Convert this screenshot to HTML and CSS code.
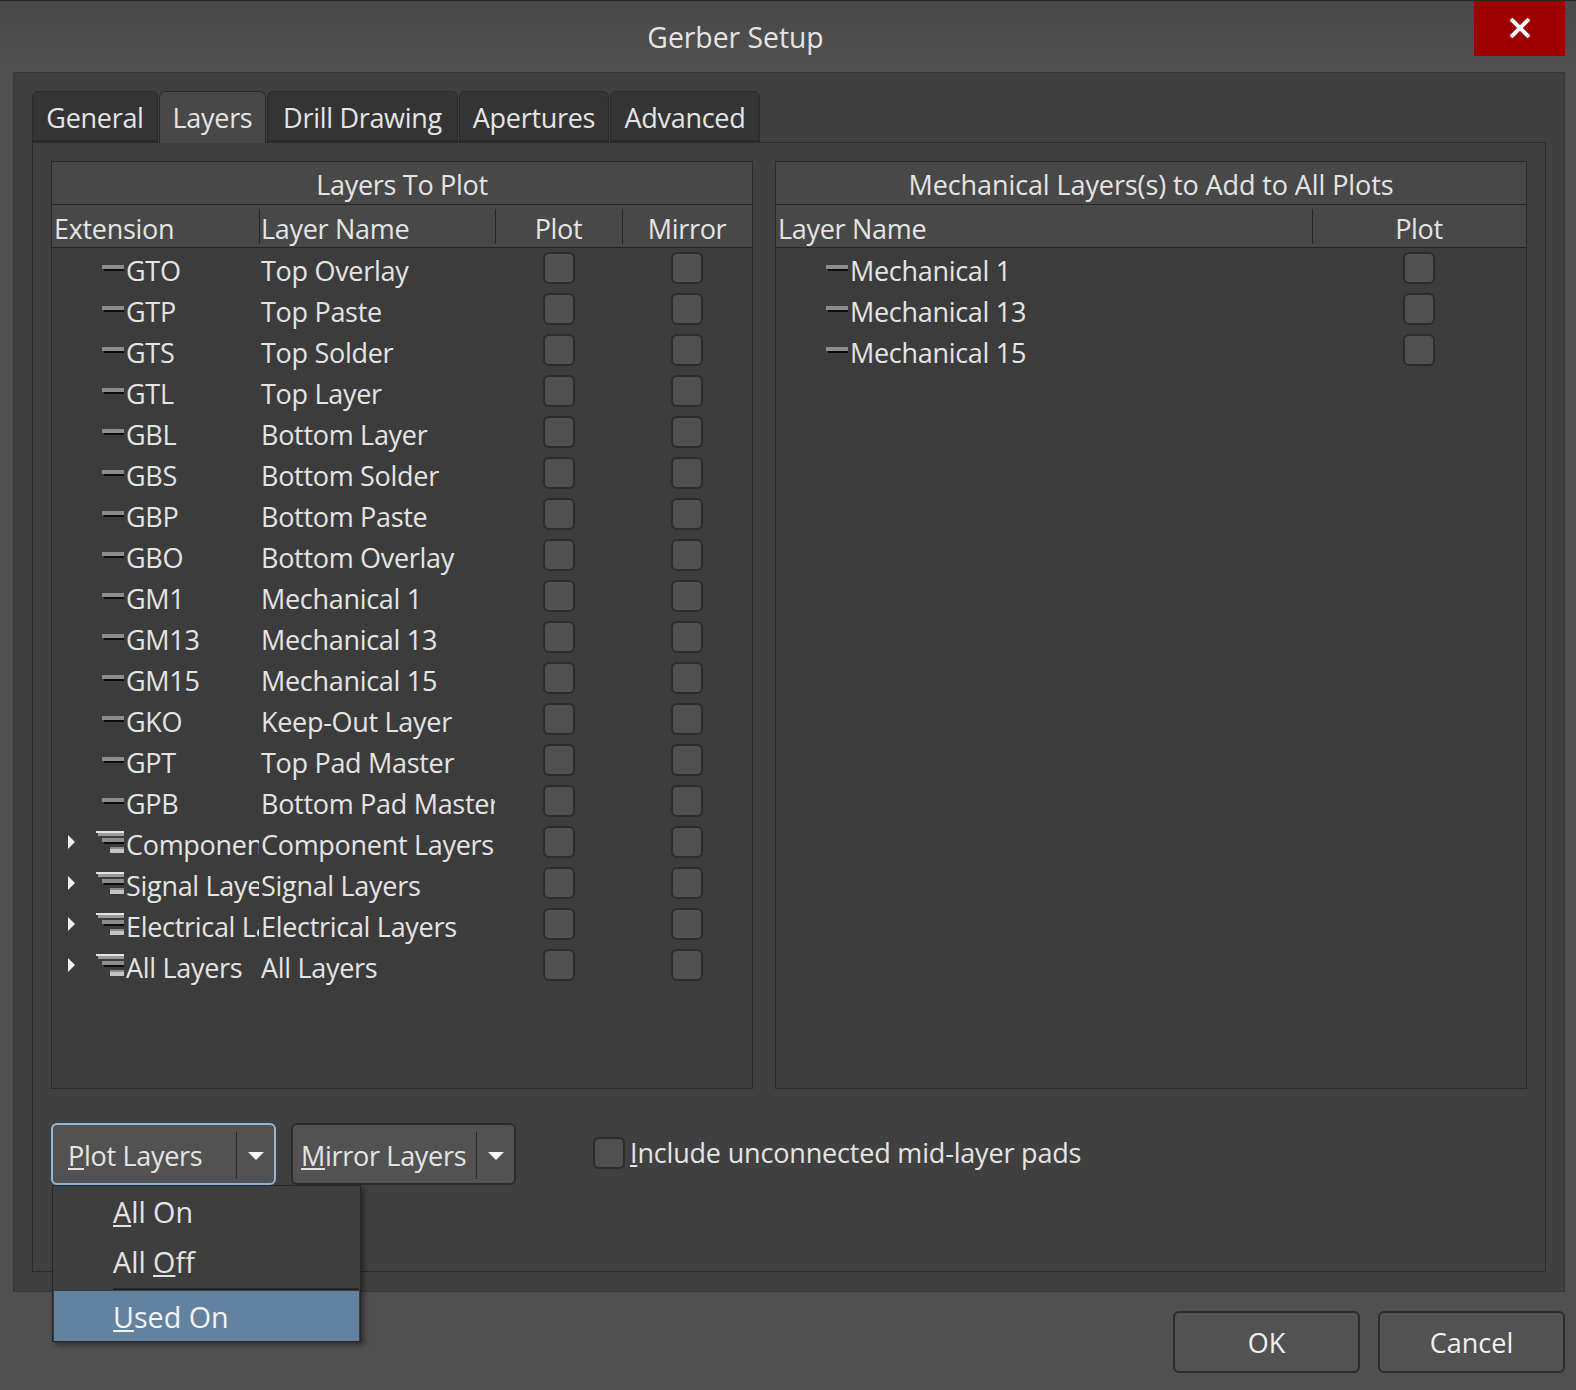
FILE: index.html
```html
<!DOCTYPE html>
<html>
<head>
	<meta charset="UTF-8">
	<title>Gerber Setup</title>
	<link rel="stylesheet" href="styles.css">
</head>
<body>
	<svg class="defs" width="0" height="0">
		<symbol id="line" viewBox="0 0 22 6">
			<rect x="0" y="0" width="22" height="4" fill="#8c8c8c"/>
			<rect x="2" y="4" width="20" height="2" fill="#0c0c0c"/>
		</symbol>
		<symbol id="stack" viewBox="0 0 28 22">
			<rect x="0" y="0" width="28" height="2" fill="#e4e4e4"/>
			<rect x="2" y="2" width="26" height="3" fill="#9a9a9a"/>
			<rect x="6" y="7" width="22" height="4" fill="#8c8c8c"/>
			<rect x="8" y="11" width="20" height="2" fill="#0c0c0c"/>
			<rect x="14" y="16" width="14" height="2" fill="#8c8c8c"/>
			<rect x="14" y="18" width="14" height="4" fill="#c4c4c4"/>
		</symbol>
	</svg>
	<div class="dialog">
		<header class="titlebar">
			<span class="title">Gerber Setup</span>
			<button class="close">
				<svg width="22" height="20" viewBox="0 0 22 20"><path d="M2 1 L20 19 M20 1 L2 19" stroke="#fff" stroke-width="4" fill="none"/></svg>
			</button>
		</header>

		<main class="group">
			<nav class="tabs">
				<div class="tab tab-general">General</div>
				<div class="tab tab-layers active">Layers</div>
				<div class="tab tab-drill">Drill Drawing</div>
				<div class="tab tab-apertures">Apertures</div>
				<div class="tab tab-advanced">Advanced</div>
			</nav>
			<section class="panel">
				<div class="tables">
					<div class="table table-layers">
						<div class="table-title">Layers To Plot</div>
						<div class="row head">
							<div class="c-ext">Extension</div>
							<div class="c-name sep">Layer Name</div>
							<div class="c-plot sep">Plot</div>
							<div class="c-mirror sep">Mirror</div>
						</div>
						<div class="row"><div class="c-ext tree"><svg class="ic"><use href="#line"/></svg><span>GTO</span></div><div class="c-name"><span>Top Overlay</span></div><div class="c-plot"><i class="cb"></i></div><div class="c-mirror"><i class="cb"></i></div></div>
						<div class="row"><div class="c-ext tree"><svg class="ic"><use href="#line"/></svg><span>GTP</span></div><div class="c-name"><span>Top Paste</span></div><div class="c-plot"><i class="cb"></i></div><div class="c-mirror"><i class="cb"></i></div></div>
						<div class="row"><div class="c-ext tree"><svg class="ic"><use href="#line"/></svg><span>GTS</span></div><div class="c-name"><span>Top Solder</span></div><div class="c-plot"><i class="cb"></i></div><div class="c-mirror"><i class="cb"></i></div></div>
						<div class="row"><div class="c-ext tree"><svg class="ic"><use href="#line"/></svg><span>GTL</span></div><div class="c-name"><span>Top Layer</span></div><div class="c-plot"><i class="cb"></i></div><div class="c-mirror"><i class="cb"></i></div></div>
						<div class="row"><div class="c-ext tree"><svg class="ic"><use href="#line"/></svg><span>GBL</span></div><div class="c-name"><span>Bottom Layer</span></div><div class="c-plot"><i class="cb"></i></div><div class="c-mirror"><i class="cb"></i></div></div>
						<div class="row"><div class="c-ext tree"><svg class="ic"><use href="#line"/></svg><span>GBS</span></div><div class="c-name"><span>Bottom Solder</span></div><div class="c-plot"><i class="cb"></i></div><div class="c-mirror"><i class="cb"></i></div></div>
						<div class="row"><div class="c-ext tree"><svg class="ic"><use href="#line"/></svg><span>GBP</span></div><div class="c-name"><span>Bottom Paste</span></div><div class="c-plot"><i class="cb"></i></div><div class="c-mirror"><i class="cb"></i></div></div>
						<div class="row"><div class="c-ext tree"><svg class="ic"><use href="#line"/></svg><span>GBO</span></div><div class="c-name"><span>Bottom Overlay</span></div><div class="c-plot"><i class="cb"></i></div><div class="c-mirror"><i class="cb"></i></div></div>
						<div class="row"><div class="c-ext tree"><svg class="ic"><use href="#line"/></svg><span>GM1</span></div><div class="c-name"><span>Mechanical 1</span></div><div class="c-plot"><i class="cb"></i></div><div class="c-mirror"><i class="cb"></i></div></div>
						<div class="row"><div class="c-ext tree"><svg class="ic"><use href="#line"/></svg><span>GM13</span></div><div class="c-name"><span>Mechanical 13</span></div><div class="c-plot"><i class="cb"></i></div><div class="c-mirror"><i class="cb"></i></div></div>
						<div class="row"><div class="c-ext tree"><svg class="ic"><use href="#line"/></svg><span>GM15</span></div><div class="c-name"><span>Mechanical 15</span></div><div class="c-plot"><i class="cb"></i></div><div class="c-mirror"><i class="cb"></i></div></div>
						<div class="row"><div class="c-ext tree"><svg class="ic"><use href="#line"/></svg><span>GKO</span></div><div class="c-name"><span>Keep-Out Layer</span></div><div class="c-plot"><i class="cb"></i></div><div class="c-mirror"><i class="cb"></i></div></div>
						<div class="row"><div class="c-ext tree"><svg class="ic"><use href="#line"/></svg><span>GPT</span></div><div class="c-name"><span>Top Pad Master</span></div><div class="c-plot"><i class="cb"></i></div><div class="c-mirror"><i class="cb"></i></div></div>
						<div class="row"><div class="c-ext tree"><svg class="ic"><use href="#line"/></svg><span>GPB</span></div><div class="c-name"><span>Bottom Pad Master</span></div><div class="c-plot"><i class="cb"></i></div><div class="c-mirror"><i class="cb"></i></div></div>
						<div class="row"><div class="c-ext tree"><b class="arrow"></b><svg class="ic-stack"><use href="#stack"/></svg><span>Component Layers</span></div><div class="c-name"><span>Component Layers</span></div><div class="c-plot"><i class="cb"></i></div><div class="c-mirror"><i class="cb"></i></div></div>
						<div class="row"><div class="c-ext tree"><b class="arrow"></b><svg class="ic-stack"><use href="#stack"/></svg><span>Signal Layers</span></div><div class="c-name"><span>Signal Layers</span></div><div class="c-plot"><i class="cb"></i></div><div class="c-mirror"><i class="cb"></i></div></div>
						<div class="row"><div class="c-ext tree"><b class="arrow"></b><svg class="ic-stack"><use href="#stack"/></svg><span>Electrical Layers</span></div><div class="c-name"><span>Electrical Layers</span></div><div class="c-plot"><i class="cb"></i></div><div class="c-mirror"><i class="cb"></i></div></div>
						<div class="row"><div class="c-ext tree"><b class="arrow"></b><svg class="ic-stack"><use href="#stack"/></svg><span>All Layers</span></div><div class="c-name"><span>All Layers</span></div><div class="c-plot"><i class="cb"></i></div><div class="c-mirror"><i class="cb"></i></div></div>
					</div>

					<div class="table table-mech">
						<div class="table-title">Mechanical Layers(s) to Add to All Plots</div>
						<div class="row head mech">
							<div class="c-mname">Layer Name</div>
							<div class="c-mplot sep">Plot</div>
						</div>
						<div class="row mech"><div class="c-mname tree"><svg class="ic"><use href="#line"/></svg><span>Mechanical 1</span></div><div class="c-mplot"><i class="cb"></i></div></div>
						<div class="row mech"><div class="c-mname tree"><svg class="ic"><use href="#line"/></svg><span>Mechanical 13</span></div><div class="c-mplot"><i class="cb"></i></div></div>
						<div class="row mech"><div class="c-mname tree"><svg class="ic"><use href="#line"/></svg><span>Mechanical 15</span></div><div class="c-mplot"><i class="cb"></i></div></div>
					</div>
				</div>

				<div class="actions">
					<div class="split focus">
						<div class="split-label"><u>P</u>lot Layers</div>
						<div class="split-arrow"><b class="caret"></b></div>
						<div class="menu">
							<div class="menu-item"><u>A</u>ll On</div>
							<div class="menu-item"><span>All <u>O</u>ff</span></div>
							<div class="menu-sep"></div>
							<div class="menu-item selected"><u>U</u>sed On</div>
						</div>
					</div>
					<div class="split">
						<div class="split-label mirror"><u>M</u>irror Layers</div>
						<div class="split-arrow"><b class="caret"></b></div>
					</div>
					<label class="check"><i class="cb"></i><span><u>I</u>nclude unconnected mid-layer pads</span></label>
				</div>
			</section>
		</main>

		<footer class="footer">
			<button class="btn">OK</button>
			<button class="btn">Cancel</button>
		</footer>
	</div>
</body>
</html>
```

FILE: styles.css
```css
* {
	box-sizing: border-box;
}

html, body {
	margin: 0;
	padding: 0;
}

body {
	width: 1576px;
	height: 1390px;
	overflow: hidden;
	font-family: "Open Sans", "Noto Sans", sans-serif;
	font-size: 27px;
	letter-spacing: -0.3px;
	color: #e4e4e4;
	background-color: #4e4e4e;
}

.defs {
	position: absolute;
}

.dialog {
	height: 1390px;
	display: flex;
	flex-direction: column;
	border-top: 1px solid #262626;
	background: linear-gradient(#484848, #505050 60px);
}

.titlebar {
	height: 71px;
	flex: none;
	position: relative;
	display: flex;
	justify-content: center;
	padding: 17px 105px 0 0;
	line-height: 38px;
	font-size: 28.3px;
	letter-spacing: 0;
}

.close {
	position: absolute;
	top: 0;
	right: 11px;
	width: 91px;
	height: 55px;
	border: 0;
	padding: 0 0 2px 1px;
	background-color: #9c0000;
	display: flex;
	align-items: center;
	justify-content: center;
}

/* main box with tabs */
.group {
	height: 1220px;
	flex: none;
	margin: 0 11px 0 13px;
	padding: 18px 18px 19px 18px;
	display: flex;
	flex-direction: column;
	background-color: #404040;
	border: 1px solid #363636;
}

.tabs {
	display: flex;
	height: 52px;
	flex: none;
	gap: 1px;
}

.tab {
	height: 52px;
	line-height: 52px;
	text-align: center;
	background-color: #343434;
	border: 1px solid #2a2a2a;
	border-bottom-width: 3px;
	border-radius: 6px 6px 0 0;
}

.tab-general { width: 126px; }
.tab-layers { width: 107px; }
.tab-drill { width: 191px; }
.tab-apertures { width: 150px; }
.tab-advanced { width: 150px; }

.tab.active {
	background-color: #484848;
	border-bottom: 0;
	position: relative;
	z-index: 1;
}

.panel {
	flex: 1;
	margin-top: -1px;
	padding: 18px 18px 0 18px;
	border: 1px solid #2a2a2a;
	background-color: #404040;
}

.tables {
	display: flex;
	gap: 22px;
}

.table {
	height: 928px;
	border: 1px solid #2a2a2a;
	background-color: #3c3c3c;
	overflow: hidden;
}

.table-layers { width: 702px; }
.table-mech { width: 752px; }

.table-title {
	height: 43px;
	line-height: 46px;
	text-align: center;
	background-color: #484848;
	border-bottom: 1px solid #262626;
}

.table-mech .table-title {
	letter-spacing: -0.1px;
}

.row {
	height: 41px;
	display: grid;
	grid-template-columns: 207px 236px 127px 1fr;
}

.row.mech {
	grid-template-columns: 536px 1fr;
}

.row.head {
	height: 43px;
	background-color: #484848;
	border-bottom: 1px solid #262626;
}

.row > div {
	position: relative;
	display: flex;
	align-items: center;
	white-space: nowrap;
	overflow: hidden;
	padding-top: 3px;
}

.row > .c-plot,
.row > .c-mirror,
.row > .c-mplot {
	padding-top: 0;
	padding-bottom: 2px;
}

.row.head > div {
	padding-top: 4px;
	padding-bottom: 0;
	padding-left: 2px;
}

.row.head > .c-plot,
.row.head > .c-mirror,
.row.head > .c-mplot {
	justify-content: center;
	padding-left: 0;
}

.sep::before {
	content: "";
	position: absolute;
	left: 0;
	top: 4px;
	bottom: 3px;
	width: 1px;
	background-color: #262626;
}

.c-name {
	padding-left: 2px;
}

.c-plot, .c-mirror, .c-mplot {
	justify-content: center;
}

.tree {
	padding-left: 50px;
}

.ic {
	width: 22px;
	height: 6px;
	margin-right: 2px;
	flex: none;
	transform: translateY(-2px);
}

.ic-stack {
	width: 28px;
	height: 22px;
	margin-left: -6px;
	margin-right: 2px;
	flex: none;
	transform: translateY(-2px);
}

.arrow {
	position: absolute;
	left: 16px;
	top: 13px;
	border-left: 7px solid #f0f0f0;
	border-top: 7px solid transparent;
	border-bottom: 7px solid transparent;
}

.cb {
	display: block;
	width: 32px;
	height: 32px;
	flex: none;
	background-color: #505050;
	border: 2px solid #2c2c2c;
	border-radius: 6px;
}

.actions {
	display: flex;
	margin-top: 34px;
	align-items: flex-start;
}

.split {
	position: relative;
	width: 225px;
	height: 62px;
	margin-right: 15px;
	display: flex;
	background-color: #525252;
	border: 2px solid #2c2c2c;
	border-radius: 6px;
}

.split.focus {
	border-color: #8fb9de;
}

.split-label {
	flex: 1;
	padding: 12px 0 0 15px;
	line-height: 38px;
	white-space: nowrap;
}

.split-label.mirror {
	padding-left: 8px;
}

.split-arrow {
	width: 38px;
	margin: 7px 0 4px 0;
	border-left: 1px solid #2c2c2c;
	display: flex;
	align-items: flex-start;
	justify-content: center;
	padding-top: 20px;
}

.caret {
	border-top: 8px solid #f4f4f4;
	border-left: 8px solid transparent;
	border-right: 8px solid transparent;
}

.menu {
	position: absolute;
	left: -1px;
	top: 60px;
	width: 309px;
	height: 157px;
	padding: 0 1px;
	font-size: 28.7px;
	letter-spacing: 0;
	background-color: #3e3e3e;
	border: 1px solid #262626;
	box-shadow: 3px 3px 5px rgba(0, 0, 0, 0.4);
	z-index: 5;
	display: flex;
	flex-direction: column;
}

.menu-item {
	height: 50px;
	flex: none;
	line-height: 52px;
	padding-left: 59px;
}

.menu-sep {
	height: 2px;
	flex: none;
	margin: 2px 0 1px 59px;
	background-color: #262626;
}

.menu-item.selected {
	color: #f4f4f4;
	background-color: #62829f;
}

.check {
	display: flex;
	align-items: center;
	margin: 11px 0 0 62px;
	letter-spacing: -0.18px;
}

.check .cb {
	margin-right: 5px;
}

.footer {
	flex: 1;
	display: flex;
	justify-content: flex-end;
	gap: 18px;
	padding: 19px 11px 0 0;
}

.btn {
	width: 187px;
	height: 62px;
	font: inherit;
	letter-spacing: 0;
	color: #f0f0f0;
	background-color: #525252;
	border: 2px solid #2c2c2c;
	border-radius: 6px;
}
```
